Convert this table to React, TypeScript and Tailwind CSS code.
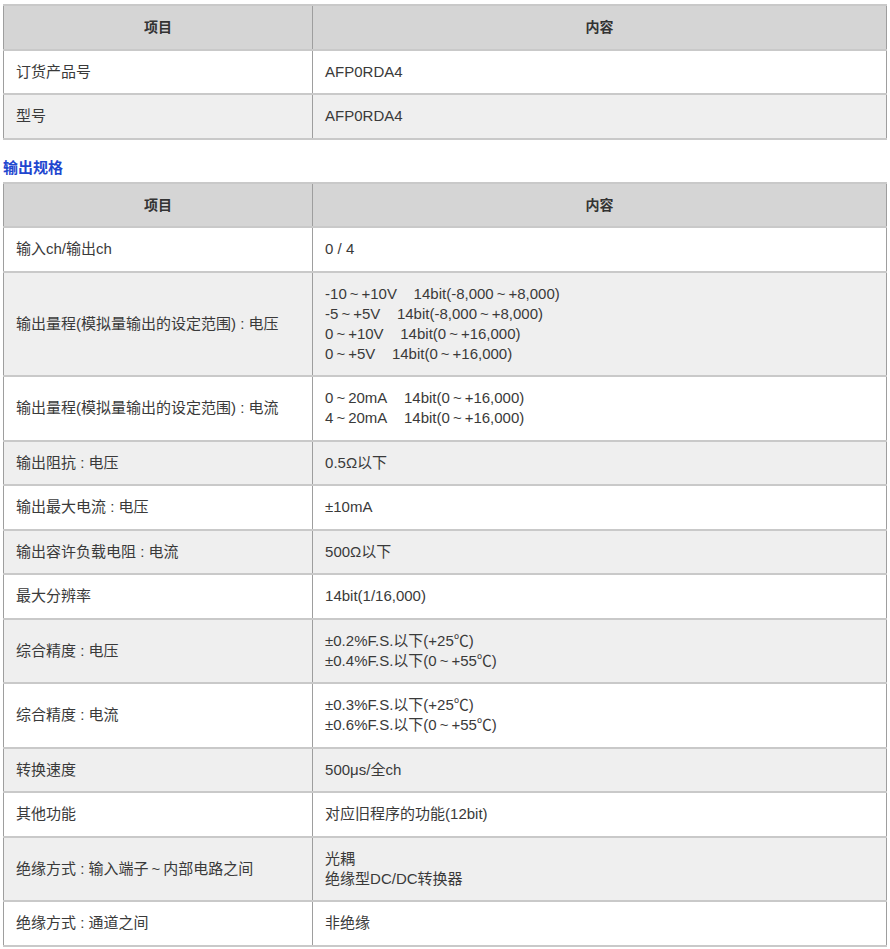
type Row = { label: string; value: string[] }

const T = '\u2009~\u2009'
const GAP = '\u00a0\u00a0\u00a0\u00a0'

const BASIC: Row[] = [
  { label: '订货产品号', value: ['AFP0RDA4'] },
  { label: '型号', value: ['AFP0RDA4'] },
]

const OUTPUT: Row[] = [
  { label: '输入ch/输出ch', value: ['0 / 4'] },
  {
    label: '输出量程(模拟量输出的设定范围) : 电压',
    value: [
      `-10${T}+10V${GAP}14bit(-8,000${T}+8,000)`,
      `-5${T}+5V${GAP}14bit(-8,000${T}+8,000)`,
      `0${T}+10V${GAP}14bit(0${T}+16,000)`,
      `0${T}+5V${GAP}14bit(0${T}+16,000)`,
    ],
  },
  {
    label: '输出量程(模拟量输出的设定范围) : 电流',
    value: [`0${T}20mA${GAP}14bit(0${T}+16,000)`, `4${T}20mA${GAP}14bit(0${T}+16,000)`],
  },
  { label: '输出阻抗 : 电压', value: ['0.5Ω以下'] },
  { label: '输出最大电流 : 电压', value: ['±10mA'] },
  { label: '输出容许负载电阻 : 电流', value: ['500Ω以下'] },
  { label: '最大分辨率', value: ['14bit(1/16,000)'] },
  { label: '综合精度 : 电压', value: ['±0.2%F.S.以下(+25℃)', `±0.4%F.S.以下(0${T}+55℃)`] },
  { label: '综合精度 : 电流', value: ['±0.3%F.S.以下(+25℃)', `±0.6%F.S.以下(0${T}+55℃)`] },
  { label: '转换速度', value: ['500μs/全ch'] },
  { label: '其他功能', value: ['对应旧程序的功能(12bit)'] },
  { label: `绝缘方式 : 输入端子${T}内部电路之间`, value: ['光耦', '绝缘型DC/DC转换器'] },
  { label: '绝缘方式 : 通道之间', value: ['非绝缘'] },
]

const cell = 'border-x border-x-[#9e9e9e] border-y-2 border-y-[#c9c9c9] px-3 py-[11.25px] align-middle'

function SpecTable({ rows }: { rows: Row[] }) {
  return (
    <table className="w-full border-collapse border border-[#9e9e9e] text-[15px] leading-5 text-[#3a3a3a]">
      <thead>
        <tr className="bg-[#d5d5d5]">
          <th className={`${cell} w-[35%] text-[14px] font-bold text-[#333]`}>项目</th>
          <th className={`${cell} text-[14px] font-bold text-[#333]`}>内容</th>
        </tr>
      </thead>
      <tbody>
        {rows.map((r, i) => (
          <tr key={r.label} className={i % 2 === 1 ? 'bg-[#efefef]' : 'bg-white'}>
            <td className={`${cell} text-left`}>{r.label}</td>
            <td className={`${cell} text-left`}>
              {r.value.map(v => (
                <div key={v}>{v}</div>
              ))}
            </td>
          </tr>
        ))}
      </tbody>
    </table>
  )
}

export default function App() {
  return (
    <div
      className="min-h-screen bg-white px-[3px] pt-[4px]"
      style={{ fontFamily: '"Liberation Sans", Arial, "Noto Sans CJK SC", sans-serif' }}
    >
      <SpecTable rows={BASIC} />
      <h3 className="pt-[18px] pb-[4px] text-[15px] font-bold leading-5 text-[#1f47cf]">输出规格</h3>
      <SpecTable rows={OUTPUT} />
    </div>
  )
}
